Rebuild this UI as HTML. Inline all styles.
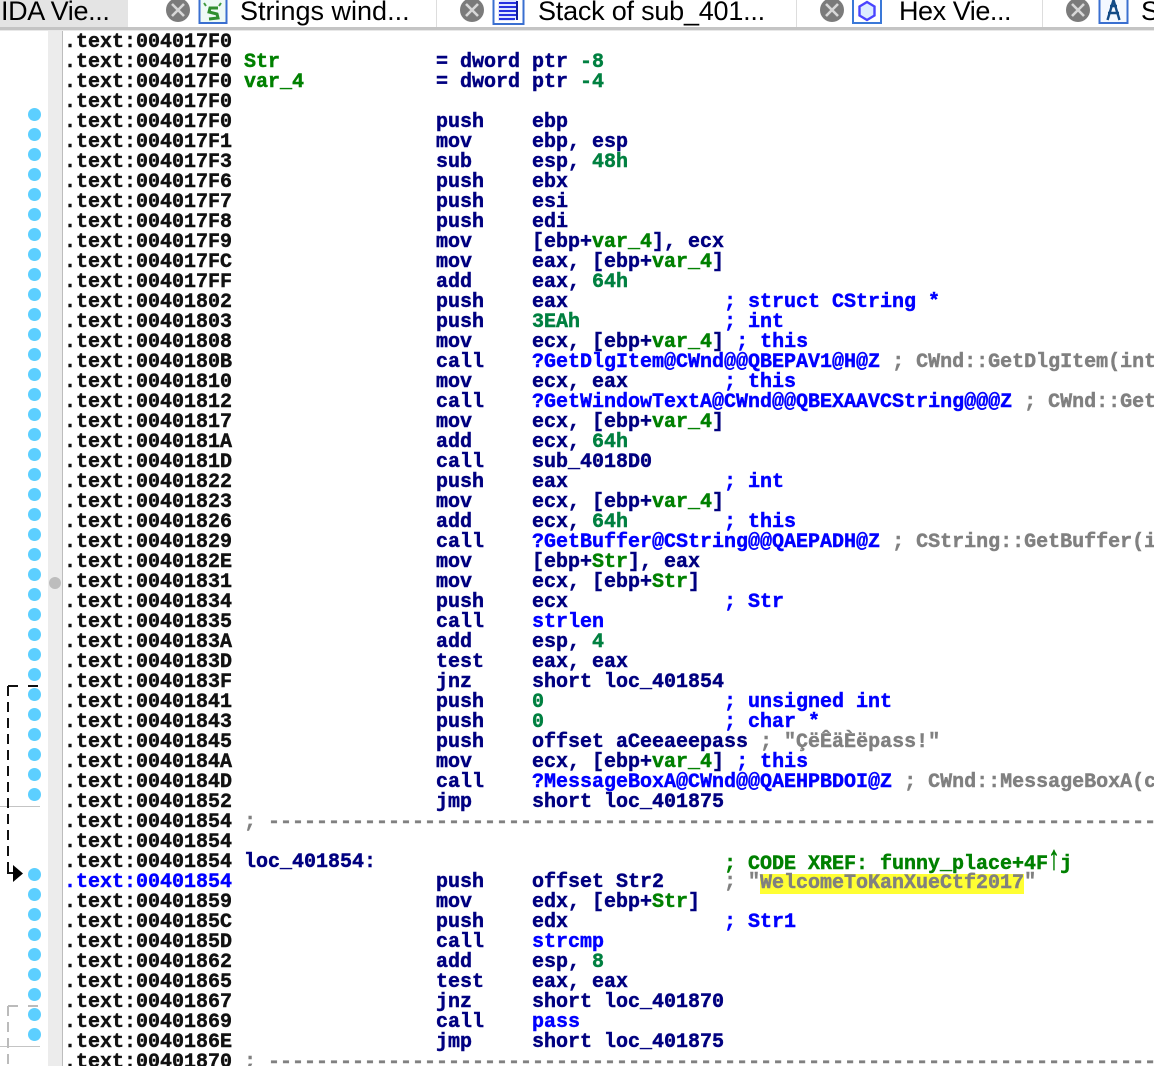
<!DOCTYPE html>
<html><head><meta charset="utf-8"><style>
html,body{margin:0;padding:0;background:#fff}
#r{position:relative;width:1154px;height:1066px;overflow:hidden;background:#fff}
#r>*{position:absolute}
.t{font:27px/30px "Liberation Sans",sans-serif;color:#000;top:-4px;white-space:pre}
#code{left:64px;top:33px;width:1090px;height:1033px;overflow:hidden;font:bold 20px/20px "Liberation Mono",monospace;color:#111;-webkit-text-stroke:.45px currentColor}
.l{position:relative;height:20px;white-space:pre}
.l>*{position:absolute;top:0}
.n{left:180px;color:#008000}.nb{left:180px;color:#000080}
.m{left:372px;color:#000080}
.p{left:468px;color:#000080;}
.c{left:660px;color:#0000ff}
.g{color:#808080}.u{color:#0000ff}.v{color:#008000}.k{color:#008040}.w{color:#0000ff}
.x{color:#808080;left:180px}
.d{width:13px;height:13px;border-radius:50%;background:#5ccfff;left:27.500px;margin-top:-.5px}
</style></head><body><div id="r">
<div style="left:0;top:0;width:1154px;height:27px;background:#fff"></div>
<div style="left:0;top:0;width:128px;height:27px;background:#e4e4e4"></div>
<div style="left:0;top:27px;width:1154px;height:3px;background:#c4c4c4"></div>
<div style="left:0;top:30px;width:1154px;height:1px;background:#e8e8e8"></div>
<div style="left:436px;top:0;width:1px;height:27px;background:#ddd"></div>
<div style="left:796px;top:0;width:1px;height:27px;background:#ddd"></div>
<div style="left:1042px;top:0;width:1px;height:27px;background:#ddd"></div>
<div class="t" style="left:1px;letter-spacing:-.35px">IDA Vie...</div>
<div class="t" style="left:240px">Strings wind...</div>
<div class="t" style="left:538px;letter-spacing:-.22px">Stack of sub_401...</div>
<div class="t" style="left:899px;letter-spacing:-.45px">Hex Vie...</div>
<div class="t" style="left:1141px">S</div>
<svg style="left:0;top:0" width="1154" height="27" viewBox="0 0 1154 27">
<g id="a"><circle cx="178" cy="10" r="12" fill="#7b7b7b"/><path d="M172 4l12 12M184 4l-12 12" stroke="#d8d8d8" stroke-width="2.6"/></g>
<circle cx="472" cy="10" r="12" fill="#7b7b7b"/><path d="M466 4l12 12M478 4l-12 12" stroke="#d8d8d8" stroke-width="2.6"/>
<circle cx="832" cy="10" r="12" fill="#7b7b7b"/><path d="M826 4l12 12M838 4l-12 12" stroke="#d8d8d8" stroke-width="2.6"/>
<circle cx="1078" cy="10" r="12" fill="#7b7b7b"/><path d="M1072 4l12 12M1084 4l-12 12" stroke="#d8d8d8" stroke-width="2.6"/>
<rect x="199.500" y="-3" width="27" height="26" fill="#eefaf6" stroke="#3a6fd0" stroke-width="2"/>
<path d="M204 3l2 3M221 3l-2 3" stroke="#3f9a3f" stroke-width="2"/>
<path d="M218 8h-8l-1 4 8 2 1 4-9 1" fill="none" stroke="#2f8f2f" stroke-width="3"/>
<rect x="493.500" y="-3" width="30" height="27" fill="#fff" stroke="#3a6fd0" stroke-width="2"/>
<path d="M501 0h16v18l-3 3h-16V3z" fill="#dfe6ff"/>
<path d="M499 3h18M499 7h18M499 11h18M499 15h18M499 19h16" stroke="#2630e0" stroke-width="2"/>
<path d="M517 1v19" stroke="#101a9c" stroke-width="2"/>
<rect x="853" y="-3" width="28" height="26" fill="#fff" stroke="#3a78d8" stroke-width="2"/>
<path d="M867 2l7.500 4.500v9l-7.500 4.500-7.500-4.500v-9z" fill="#dcecff" stroke="#4a44ff" stroke-width="2.400"/>
<rect x="1099.500" y="-3" width="28" height="26" fill="#f4f8ff" stroke="#3a6fd0" stroke-width="2"/>
<path d="M1113.500 0l-6 20M1113.500 0l6 20M1108 13h11M1110 6h7" fill="none" stroke="#134b86" stroke-width="2.400"/>
</svg>
<div style="left:48px;top:31px;width:14px;height:1035px;background:#ececec"></div>
<div style="left:62px;top:31px;width:1px;height:1035px;background:#bdbdbd"></div>
<div style="left:49px;top:577px;width:12px;height:12px;border-radius:50%;background:#bdbdbd"></div>
<div style="left:0;top:806px;width:40px;height:1px;background:#c4c4c4"></div>
<div style="left:0;top:1046px;width:40px;height:1px;background:#c4c4c4"></div>
<svg style="left:0;top:680px" width="48" height="386" viewBox="0 680 48 386">
<path d="M8 686h10M28 686h10" stroke="#111" stroke-width="2" fill="none"/>
<path d="M8 686v184" stroke="#111" stroke-width="2" stroke-dasharray="10 6" fill="none"/>
<path d="M8 867v6h7" stroke="#111" stroke-width="2" fill="none"/>
<path d="M13 865l10 8.500-10 8.500z" fill="#000"/>
<path d="M8 1006h10M28 1006h10" stroke="#bbb" stroke-width="2" fill="none"/>
<path d="M8 1006v58" stroke="#bbb" stroke-width="2" stroke-dasharray="10 6" fill="none"/>
</svg>
<div class="d" style="top:108px"></div><div class="d" style="top:128px"></div><div class="d" style="top:148px"></div><div class="d" style="top:168px"></div><div class="d" style="top:188px"></div><div class="d" style="top:208px"></div><div class="d" style="top:228px"></div><div class="d" style="top:248px"></div><div class="d" style="top:268px"></div><div class="d" style="top:288px"></div><div class="d" style="top:308px"></div><div class="d" style="top:328px"></div><div class="d" style="top:348px"></div><div class="d" style="top:368px"></div><div class="d" style="top:388px"></div><div class="d" style="top:408px"></div><div class="d" style="top:428px"></div><div class="d" style="top:448px"></div><div class="d" style="top:468px"></div><div class="d" style="top:488px"></div><div class="d" style="top:508px"></div><div class="d" style="top:528px"></div><div class="d" style="top:548px"></div><div class="d" style="top:568px"></div><div class="d" style="top:588px"></div><div class="d" style="top:608px"></div><div class="d" style="top:628px"></div><div class="d" style="top:648px"></div><div class="d" style="top:668px"></div><div class="d" style="top:688px"></div><div class="d" style="top:708px"></div><div class="d" style="top:728px"></div><div class="d" style="top:748px"></div><div class="d" style="top:768px"></div><div class="d" style="top:788px"></div>
<div class="d" style="top:868px"></div><div class="d" style="top:888px"></div><div class="d" style="top:908px"></div><div class="d" style="top:928px"></div><div class="d" style="top:948px"></div><div class="d" style="top:968px"></div><div class="d" style="top:988px"></div><div class="d" style="top:1008px"></div><div class="d" style="top:1028px"></div>
<div id="code">
<div class="l"><a>.text:004017F0</a></div>
<div class="l"><a>.text:004017F0</a><i class="n" style="font-style:normal">Str</i><b class="m">= dword ptr <span class="k">-8</span></b></div>
<div class="l"><a>.text:004017F0</a><i class="n" style="font-style:normal">var_4</i><b class="m">= dword ptr <span class="k">-4</span></b></div>
<div class="l"><a>.text:004017F0</a></div>
<div class="l"><a>.text:004017F0</a><b class="m">push</b><b class="p">ebp</b></div>
<div class="l"><a>.text:004017F1</a><b class="m">mov</b><b class="p">ebp, esp</b></div>
<div class="l"><a>.text:004017F3</a><b class="m">sub</b><b class="p">esp, <span class="k">48h</span></b></div>
<div class="l"><a>.text:004017F6</a><b class="m">push</b><b class="p">ebx</b></div>
<div class="l"><a>.text:004017F7</a><b class="m">push</b><b class="p">esi</b></div>
<div class="l"><a>.text:004017F8</a><b class="m">push</b><b class="p">edi</b></div>
<div class="l"><a>.text:004017F9</a><b class="m">mov</b><b class="p">[ebp+<span class="v">var_4</span>], ecx</b></div>
<div class="l"><a>.text:004017FC</a><b class="m">mov</b><b class="p">eax, [ebp+<span class="v">var_4</span>]</b></div>
<div class="l"><a>.text:004017FF</a><b class="m">add</b><b class="p">eax, <span class="k">64h</span></b></div>
<div class="l"><a>.text:00401802</a><b class="m">push</b><b class="p">eax</b><b class="c">; struct CString *</b></div>
<div class="l"><a>.text:00401803</a><b class="m">push</b><b class="p k" style="color:#008040">3EAh</b><b class="c">; int</b></div>
<div class="l"><a>.text:00401808</a><b class="m">mov</b><b class="p">ecx, [ebp+<span class="v">var_4</span>] <span class="w">; this</span></b></div>
<div class="l"><a>.text:0040180B</a><b class="m">call</b><b class="p"><span class="w">?GetDlgItem@CWnd@@QBEPAV1@H@Z</span> <span class="g">; CWnd::GetDlgItem(int</span></b></div>
<div class="l"><a>.text:00401810</a><b class="m">mov</b><b class="p">ecx, eax</b><b class="c">; this</b></div>
<div class="l"><a>.text:00401812</a><b class="m">call</b><b class="p"><span class="w">?GetWindowTextA@CWnd@@QBEXAAVCString@@@Z</span> <span class="g">; CWnd::Get</span></b></div>
<div class="l"><a>.text:00401817</a><b class="m">mov</b><b class="p">ecx, [ebp+<span class="v">var_4</span>]</b></div>
<div class="l"><a>.text:0040181A</a><b class="m">add</b><b class="p">ecx, <span class="k">64h</span></b></div>
<div class="l"><a>.text:0040181D</a><b class="m">call</b><b class="p">sub_4018D0</b></div>
<div class="l"><a>.text:00401822</a><b class="m">push</b><b class="p">eax</b><b class="c">; int</b></div>
<div class="l"><a>.text:00401823</a><b class="m">mov</b><b class="p">ecx, [ebp+<span class="v">var_4</span>]</b></div>
<div class="l"><a>.text:00401826</a><b class="m">add</b><b class="p">ecx, <span class="k">64h</span></b><b class="c">; this</b></div>
<div class="l"><a>.text:00401829</a><b class="m">call</b><b class="p"><span class="w">?GetBuffer@CString@@QAEPADH@Z</span> <span class="g">; CString::GetBuffer(i</span></b></div>
<div class="l"><a>.text:0040182E</a><b class="m">mov</b><b class="p">[ebp+<span class="v">Str</span>], eax</b></div>
<div class="l"><a>.text:00401831</a><b class="m">mov</b><b class="p">ecx, [ebp+<span class="v">Str</span>]</b></div>
<div class="l"><a>.text:00401834</a><b class="m">push</b><b class="p">ecx</b><b class="c">; Str</b></div>
<div class="l"><a>.text:00401835</a><b class="m">call</b><b class="p w" style="color:#0000ff">strlen</b></div>
<div class="l"><a>.text:0040183A</a><b class="m">add</b><b class="p">esp, <span class="k">4</span></b></div>
<div class="l"><a>.text:0040183D</a><b class="m">test</b><b class="p">eax, eax</b></div>
<div class="l"><a>.text:0040183F</a><b class="m">jnz</b><b class="p">short loc_401854</b></div>
<div class="l"><a>.text:00401841</a><b class="m">push</b><b class="p k" style="color:#008040">0</b><b class="c">; unsigned int</b></div>
<div class="l"><a>.text:00401843</a><b class="m">push</b><b class="p k" style="color:#008040">0</b><b class="c">; char *</b></div>
<div class="l"><a>.text:00401845</a><b class="m">push</b><b class="p">offset aCeeaeepass <span class="g">; "ÇëÊäÈëpass!"</span></b></div>
<div class="l"><a>.text:0040184A</a><b class="m">mov</b><b class="p">ecx, [ebp+<span class="v">var_4</span>] <span class="w">; this</span></b></div>
<div class="l"><a>.text:0040184D</a><b class="m">call</b><b class="p"><span class="w">?MessageBoxA@CWnd@@QAEHPBDOI@Z</span> <span class="g">; CWnd::MessageBoxA(c</span></b></div>
<div class="l"><a>.text:00401852</a><b class="m">jmp</b><b class="p">short loc_401875</b></div>
<div class="l"><a>.text:00401854</a><b class="x">; ---------------------------------------------------------------------------------------------------</b></div>
<div class="l"><a>.text:00401854</a></div>
<div class="l"><a>.text:00401854</a><b class="nb">loc_401854:</b><b class="c" style="color:#008000;top:2px">; CODE XREF: funny_place+4F<span style="display:inline-block;transform:scale(1.1,1.7);transform-origin:50% 70%">↑</span>j</b></div>
<div class="l" style="color:#0000ff"><a>.text:00401854</a><b class="m">push</b><b class="p">offset Str2</b><b class="c" style="color:#808080">; "<span style="background:#ffff33;display:inline-block;height:20px;position:relative;top:1px;margin:0 0 -2px">WelcomeToKanXueCtf2017</span>"</b></div>
<div class="l"><a>.text:00401859</a><b class="m">mov</b><b class="p">edx, [ebp+<span class="v">Str</span>]</b></div>
<div class="l"><a>.text:0040185C</a><b class="m">push</b><b class="p">edx</b><b class="c">; Str1</b></div>
<div class="l"><a>.text:0040185D</a><b class="m">call</b><b class="p" style="color:#0000ff">strcmp</b></div>
<div class="l"><a>.text:00401862</a><b class="m">add</b><b class="p">esp, <span class="k">8</span></b></div>
<div class="l"><a>.text:00401865</a><b class="m">test</b><b class="p">eax, eax</b></div>
<div class="l"><a>.text:00401867</a><b class="m">jnz</b><b class="p">short loc_401870</b></div>
<div class="l"><a>.text:00401869</a><b class="m">call</b><b class="p" style="color:#0000ff">pass</b></div>
<div class="l"><a>.text:0040186E</a><b class="m">jmp</b><b class="p">short loc_401875</b></div>
<div class="l"><a>.text:00401870</a><b class="x">; ---------------------------------------------------------------------------------------------------</b></div>
</div>
</div></body></html>
